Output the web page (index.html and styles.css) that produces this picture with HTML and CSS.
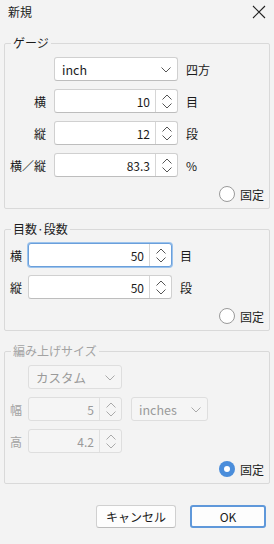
FILE: index.html
```html
<!DOCTYPE html>
<html lang="ja">
<head>
<meta charset="UTF-8">
<meta name="viewport" content="width=device-width, initial-scale=1.0">
<title>新規</title>
<link rel="stylesheet" href="styles.css">
</head>
<body>
<div class="dialog">
    <div class="titlebar">
        <span class="title">新規</span>
        <svg class="close" width="14" height="14" viewBox="0 0 14 14"><path d="M1 1 L13 13 M13 1 L1 13" stroke="#222" stroke-width="1.1" fill="none"/></svg>
    </div>

    <fieldset class="group">
        <legend>ゲージ</legend>
        <div class="grid gauge-grid">
            <span></span>
            <div class="combo">inch<svg class="chev" width="10" height="6" viewBox="0 0 10 6"><path d="M0.5 0.5 L5 5 L9.5 0.5" stroke="#555" fill="none"/></svg></div>
            <span class="unit">四方</span>

            <span class="lbl">横</span>
            <div class="spin"><span class="val">10</span><span class="spin-btn"><svg width="10" height="15" viewBox="0 0 10 15"><path d="M0.5 5.5 L5 1 L9.5 5.5 M0.5 9.5 L5 14 L9.5 9.5" stroke="#555" fill="none"/></svg></span></div>
            <span class="unit">目</span>

            <span class="lbl">縦</span>
            <div class="spin"><span class="val">12</span><span class="spin-btn"><svg width="10" height="15" viewBox="0 0 10 15"><path d="M0.5 5.5 L5 1 L9.5 5.5 M0.5 9.5 L5 14 L9.5 9.5" stroke="#555" fill="none"/></svg></span></div>
            <span class="unit">段</span>

            <span class="lbl">横／縦</span>
            <div class="spin"><span class="val">83.3</span><span class="spin-btn"><svg width="10" height="15" viewBox="0 0 10 15"><path d="M0.5 5.5 L5 1 L9.5 5.5 M0.5 9.5 L5 14 L9.5 9.5" stroke="#555" fill="none"/></svg></span></div>
            <span class="unit">%</span>
        </div>
        <div class="radio-row"><span class="radio"></span>固定</div>
    </fieldset>

    <fieldset class="group">
        <legend>目数·段数</legend>
        <div class="grid count-grid">
            <span class="lbl">横</span>
            <div class="spin focused"><span class="val">50</span><span class="spin-btn"><svg width="10" height="15" viewBox="0 0 10 15"><path d="M0.5 5.5 L5 1 L9.5 5.5 M0.5 9.5 L5 14 L9.5 9.5" stroke="#555" fill="none"/></svg></span></div>
            <span class="unit">目</span>

            <span class="lbl">縦</span>
            <div class="spin"><span class="val">50</span><span class="spin-btn"><svg width="10" height="15" viewBox="0 0 10 15"><path d="M0.5 5.5 L5 1 L9.5 5.5 M0.5 9.5 L5 14 L9.5 9.5" stroke="#555" fill="none"/></svg></span></div>
            <span class="unit">段</span>
        </div>
        <div class="radio-row"><span class="radio"></span>固定</div>
    </fieldset>

    <fieldset class="group disabled">
        <legend>編み上げサイズ</legend>
        <div class="grid size-grid">
            <span></span>
            <div class="combo">カスタム<svg class="chev" width="10" height="6" viewBox="0 0 10 6"><path d="M0.5 0.5 L5 5 L9.5 0.5" stroke="#aaa" fill="none"/></svg></div>
            <span></span>

            <span class="lbl">幅</span>
            <div class="spin"><span class="val">5</span><span class="spin-btn"><svg width="10" height="15" viewBox="0 0 10 15"><path d="M0.5 5.5 L5 1 L9.5 5.5 M0.5 9.5 L5 14 L9.5 9.5" stroke="#aaa" fill="none"/></svg></span></div>
            <div class="combo unit-combo">inches<svg class="chev" width="10" height="6" viewBox="0 0 10 6"><path d="M0.5 0.5 L5 5 L9.5 0.5" stroke="#aaa" fill="none"/></svg></div>

            <span class="lbl">高</span>
            <div class="spin"><span class="val">4.2</span><span class="spin-btn"><svg width="10" height="15" viewBox="0 0 10 15"><path d="M0.5 5.5 L5 1 L9.5 5.5 M0.5 9.5 L5 14 L9.5 9.5" stroke="#aaa" fill="none"/></svg></span></div>
            <span></span>
        </div>
        <div class="radio-row enabled"><span class="radio checked"></span>固定</div>
    </fieldset>

    <div class="buttons">
        <button class="btn">キャンセル</button>
        <button class="btn default">OK</button>
    </div>
</div>
</body>
</html>
```

FILE: styles.css
```css
body {
    margin: 0;
    background-color: #f3f3f3;
    font-family: "Noto Sans CJK JP", "Noto Sans", sans-serif;
    font-size: 12px;
    color: #1b1b1b;
}

.dialog {
    width: 274px;
    height: 544px;
    display: flex;
    flex-direction: column;
}

.titlebar {
    height: 35px;
    box-sizing: border-box;
    padding: 4px 8px 0 8px;
    display: flex;
    justify-content: space-between;
    align-items: flex-start;
    line-height: 16px;
}

.close {
    margin-top: 1px;
}

.group {
    margin: 0 4px 12px 4px;
    padding: 6px 5px 6px 3px;
    border: 1px solid #d9d9d9;
    border-radius: 2px;
    min-width: 0;
}

.group legend {
    padding: 0 2px;
    margin-left: 3px;
    line-height: 16px;
}

.grid {
    display: grid;
    grid-auto-rows: 24px;
    row-gap: 8px;
    align-items: center;
}

.gauge-grid {
    grid-template-columns: 38px 124px auto;
    column-gap: 8px;
}

.count-grid {
    grid-template-columns: 14px 144px auto;
    column-gap: 6px;
}

.count-grid .unit {
    margin-left: 2px;
}

.size-grid {
    grid-template-columns: 14px 94px 80px;
    column-gap: 6px;
}

.unit-combo {
    margin-left: 3px;
}

.lbl {
    text-align: right;
    white-space: nowrap;
}

.combo,
.spin {
    height: 24px;
    box-sizing: border-box;
    background-color: #fff;
    border: 1px solid #d0d0d0;
    border-bottom-color: #bdbdbd;
    border-radius: 3px;
    display: flex;
    align-items: center;
}

.combo {
    justify-content: space-between;
    padding: 0 6px 0 7px;
    font-size: 12.5px;
}

.chev {
    margin-top: 1px;
}

.spin .val {
    flex: 1;
    text-align: right;
    padding-right: 5px;
}

.spin-btn {
    width: 21px;
    height: 100%;
    border-left: 1px solid #d6d6d6;
    display: flex;
    align-items: center;
    justify-content: center;
}

.spin.focused {
    border-color: #6a9fdb;
    box-shadow: 0 0 0 1px #9cc3ec;
}

.radio-row {
    display: flex;
    justify-content: flex-end;
    align-items: center;
    gap: 5px;
    margin-top: 9px;
    height: 16px;
}

.radio {
    width: 14px;
    height: 14px;
    border: 1px solid #9a9a9a;
    border-radius: 50%;
    background-color: #fff;
}

.radio.checked {
    width: 16px;
    height: 16px;
    border: none;
    background-color: #4a8ddb;
    display: flex;
    align-items: center;
    justify-content: center;
}

.radio.checked::after {
    content: "";
    width: 6px;
    height: 6px;
    border-radius: 50%;
    background-color: #fff;
}

.disabled legend,
.disabled .lbl {
    color: #a3a3a3;
}

.disabled .combo,
.disabled .spin {
    background-color: #f5f5f5;
    border-color: #dedede;
    color: #9a9a9a;
}

.disabled .spin-btn {
    border-left-color: #e0e0e0;
}

.disabled .radio-row.enabled {
    color: #1b1b1b;
    margin-top: 8px;
}

.buttons {
    display: flex;
    justify-content: flex-end;
    gap: 14px;
    padding: 9px 8px 0 0;
}

.btn {
    height: 23px;
    box-sizing: border-box;
    background-color: #fdfdfd;
    border: 1px solid #d0d0d0;
    border-bottom-color: #bbb;
    border-radius: 3px;
    font-family: "Noto Sans CJK JP", "Noto Sans", sans-serif;
    font-size: 12px;
    color: #1b1b1b;
    padding: 0;
    width: 80px;
}

.btn.default {
    width: 76px;
    border: 2px solid #5f98da;
}
```
